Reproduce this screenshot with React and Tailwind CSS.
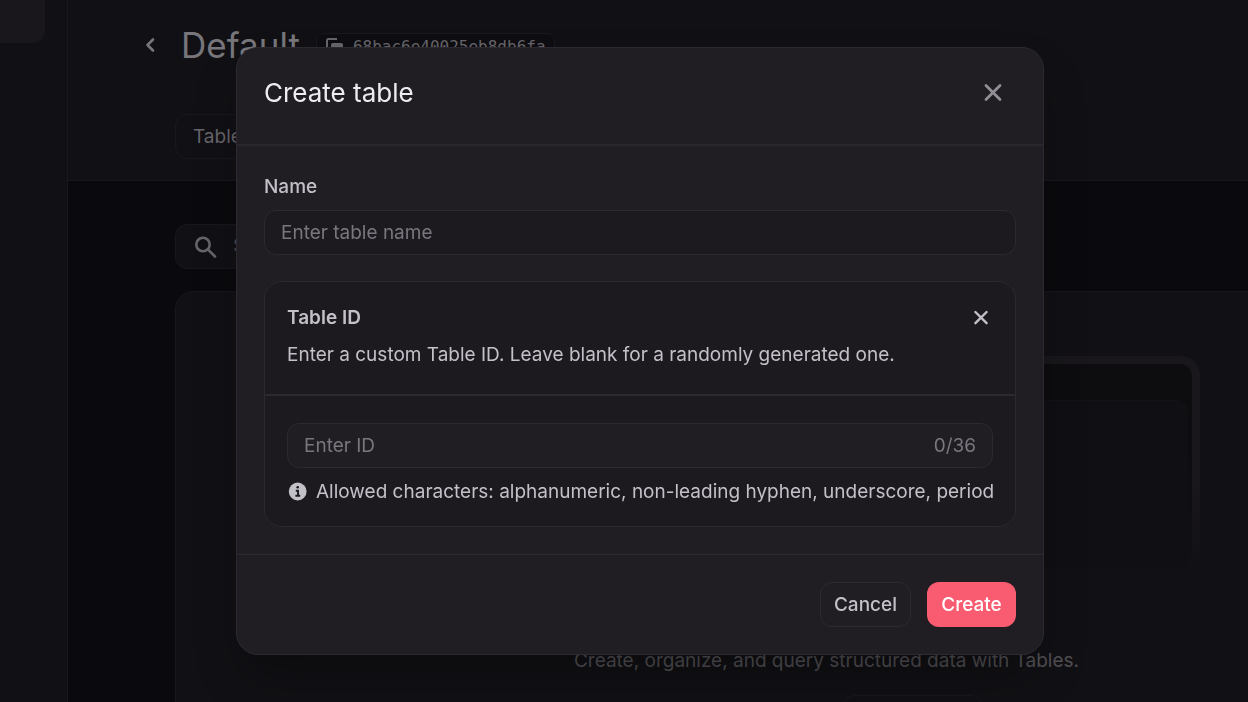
import React from "react";

function CloseIcon({ className, strokeWidth }) {
  return (
    <svg viewBox="0 0 20 20" className={className} fill="none" stroke="currentColor" strokeWidth={strokeWidth} strokeLinecap="round" aria-hidden="true">
      <path d="M3 2.5 17 16.5M17 2.5 3 16.5" />
    </svg>
  );
}

function InfoIcon() {
  return (
    <svg viewBox="0 0 20 20" className="size-5 shrink-0" aria-hidden="true">
      <circle cx="10.7" cy="9.5" r="8.9" fill="#c3c1c8" />
      <circle cx="10.7" cy="5.3" r="1.3" fill="#1c191f" />
      <path d="M8.8 8.7H11v4.9M8.4 13.7h4.8" fill="none" stroke="#1c191f" strokeWidth="1.9" />
    </svg>
  );
}

function PageHeader() {
  return (
    <header className="h-[181px] border-b border-[#1a181d] bg-[#111014] pt-6 pl-[73px]">
      <div className="flex h-[42px] items-center">
        <a href="#databases" aria-label="Back" className="mr-5 text-[#77767b]">
          <svg viewBox="0 0 20 20" className="size-5" fill="none" stroke="currentColor" strokeWidth="2.6" strokeLinecap="round" strokeLinejoin="round" aria-hidden="true">
            <path d="m12 4.5-5.5 5.5 5.5 5.5" />
          </svg>
        </a>
        <h1 className="text-[35px] leading-10 text-[#77767b]">Default</h1>
        <button type="button" className="mt-1 ml-4 flex h-7 items-center gap-2 rounded-lg border border-[#1a181d] bg-[#0e0d11] px-2 font-['DejaVu_Sans_Mono',monospace] text-base leading-6 text-[#67656b]">
          <svg viewBox="0 0 20 20" className="size-5" fill="none" aria-hidden="true">
            <path d="M2 12V3.5Q2 2 3.5 2H12" stroke="currentColor" strokeWidth="2" />
            <rect x="6" y="6" width="12" height="12" rx="2" fill="currentColor" />
          </svg>
          68bac6e40025eb8db6fa
        </button>
      </div>
      <nav className="mt-12 ml-[34px] flex">
        <a href="#tables" className="flex h-[45px] items-center rounded-xl border border-[#1a181d] px-[17px] pt-0.5 text-[19px] text-[#67656b]">Tables</a>
      </nav>
    </header>
  );
}

function Preview() {
  return (
    <div className="h-[210px] w-[746px] rounded-t-[20px] bg-linear-to-b from-[#19171b] from-60% to-[#111014] px-2 pt-2">
      <div className="h-full rounded-t-xl bg-linear-to-b from-[#0d0c0f] from-40% to-[#111014] px-1 pt-9">
        <div className="h-full rounded-t-xl border-t border-[#131216] bg-[#100f13]" />
      </div>
    </div>
  );
}

function Background() {
  return (
    <div className="flex h-screen overflow-hidden bg-[#0a090d]">
      <aside className="w-[68px] shrink-0 border-r border-[#1a181d] bg-[#111014]">
        <div className="mr-[22px] h-[43px] rounded-br-xl bg-[#19171c]" />
      </aside>
      <main className="min-w-0 flex-1">
        <PageHeader />
        <section className="pt-[43px] pl-[107px]">
          <label className="flex h-[45px] w-[400px] items-center gap-4 rounded-xl border border-[#19171c] bg-[#111014] px-[17px] text-[#67656b]">
            <svg viewBox="0 0 24 24" className="size-6 shrink-0" fill="none" stroke="currentColor" strokeWidth="2.6" strokeLinecap="round" aria-hidden="true">
              <circle cx="10" cy="9.5" r="6.7" />
              <path d="m15.3 14.8 6.7 6.7" />
            </svg>
            <input type="search" placeholder="Search by name" aria-label="Search tables" className="w-full bg-transparent text-[19px] placeholder:text-[#4f4d53]" />
          </label>
          <div className="mt-[22px] -mr-[230px] flex h-[480px] flex-col items-center rounded-[18px] border border-[#19171c] bg-[#111014] pt-16">
            <Preview />
            <p className="mt-[81px] text-[19px] leading-7 text-[#525055]">Create, organize, and query structured data with Tables.</p>
            <div className="mt-5 flex gap-3">
              <a href="#docs" aria-label="Documentation" className="h-11 w-40" />
              <button type="button" aria-label="Create table" className="h-11 w-[140px] rounded-xl border border-[#1a181d]" />
            </div>
          </div>
        </section>
      </main>
    </div>
  );
}

function CreateTableDialog() {
  return (
    <form role="dialog" aria-modal="true" aria-labelledby="dialog-title" className="w-[808px] max-w-full overflow-hidden rounded-[22px] border border-[#2c2a30] bg-[#201d23] text-[19px] leading-7 text-[#c3c1c8] shadow-2xl shadow-black/40">
      <header className="flex h-[98px] items-center justify-between border-b-2 border-[#29272d] px-[27px] pb-1.5">
        <h2 id="dialog-title" className="text-[26px] leading-8 text-[#ededf0]">Create table</h2>
        <button type="button" aria-label="Close" className="mr-[13px] text-[#918f96]">
          <CloseIcon className="size-5" strokeWidth="2.8" />
        </button>
      </header>

      <div className="px-[27px] pt-[27px] pb-[27px]">
        <label htmlFor="table-name" className="block font-medium">Name</label>
        <input id="table-name" type="text" placeholder="Enter table name" className="mt-[9px] block h-[45px] w-full rounded-xl border border-[#2c2a30] bg-[#1c191f] px-4 placeholder:text-[#79777e]" />

        <section className="mt-[26px] rounded-[18px] border border-[#2c2a30] bg-[#1c191f]">
          <div className="border-b-2 border-[#2c2a30] px-[22px] pt-[22px] pb-[25px]">
            <div className="flex items-center justify-between">
              <h3 className="font-semibold">Table ID</h3>
              <button type="button" aria-label="Remove custom ID" className="mr-1">
                <CloseIcon className="size-4" strokeWidth="3" />
              </button>
            </div>
            <p className="mt-[9px]">Enter a custom Table ID. Leave blank for a randomly generated one.</p>
          </div>
          <div className="px-[22px] pt-[27px] pb-5">
            <div className="flex h-[45px] items-center rounded-xl border border-[#2c2a30] bg-[#201d23] px-4 text-[#79777e]">
              <input type="text" maxLength={36} placeholder="Enter ID" aria-label="Table ID" className="min-w-0 flex-1 bg-transparent placeholder:text-[#79777e]" />
              <span>0/36</span>
            </div>
            <p className="mt-2.5 flex items-center gap-[9px] sm:whitespace-nowrap">
              <InfoIcon />
              Allowed characters: alphanumeric, non-leading hyphen, underscore, period
            </p>
          </div>
        </section>
      </div>

      <footer className="flex justify-end gap-4 border-t border-[#2c2a30] p-[27px] font-medium">
        <button type="button" className="h-[45px] min-w-[89px] rounded-xl border border-[#2c2a30] px-[13px]">Cancel</button>
        <button type="submit" className="h-[45px] min-w-[89px] rounded-xl bg-[#f95c70] px-[13px] text-white">Create</button>
      </footer>
    </form>
  );
}

export default function App() {
  return (
    <div className="font-['Inter',sans-serif]">
      <Background />
      <div className="fixed inset-0 flex items-center justify-center pl-8">
        <CreateTableDialog />
      </div>
    </div>
  );
}
